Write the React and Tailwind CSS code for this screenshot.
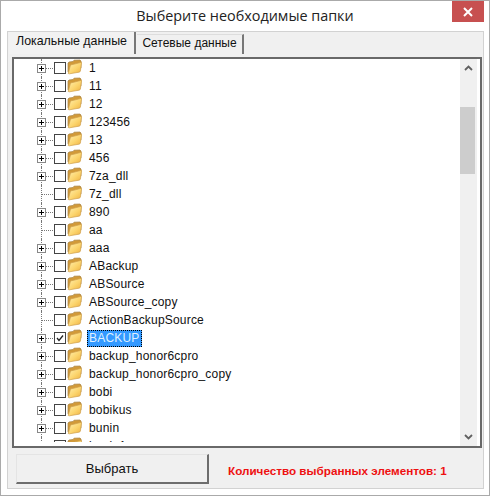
const folders = [
  { name: "1", plus: true },
  { name: "11", plus: true },
  { name: "12", plus: true },
  { name: "123456", plus: true },
  { name: "13", plus: true },
  { name: "456", plus: true },
  { name: "7za_dll", plus: true },
  { name: "7z_dll" },
  { name: "890", plus: true },
  { name: "aa" },
  { name: "aaa", plus: true },
  { name: "ABackup", plus: true },
  { name: "ABSource", plus: true },
  { name: "ABSource_copy", plus: true },
  { name: "ActionBackupSource" },
  { name: "BACKUP", plus: true, checked: true },
  { name: "backup_honor6cpro", plus: true },
  { name: "backup_honor6cpro_copy", plus: true },
  { name: "bobi", plus: true },
  { name: "bobikus", plus: true },
  { name: "bunin", plus: true },
  { name: "bunin1", plus: true },
];

const FolderIcon = () => (
  <svg width="15" height="16" viewBox="0 0 15 16" className="shrink-0">
    <defs>
      <linearGradient id="leaf" x1="0" y1="0" x2="1" y2="1">
        <stop offset="0" stopColor="#fff0b0" />
        <stop offset="0.55" stopColor="#fcd56e" />
        <stop offset="1" stopColor="#eeb040" />
      </linearGradient>
    </defs>
    <path d="M1 13 L1 4 L2 3 L6 2.5 L7 1.2 L13 1 L14 2 L14 9 Z" fill="#d29a38" stroke="#a88345" strokeWidth="0.7" />
    <path d="M1.2 14.5 L3.5 6 Q8 5 14.6 3.2 L13.4 12 Q13.2 13 12 13.2 L2.4 14.8 Z" fill="url(#leaf)" stroke="#cf9f4c" strokeWidth="0.7" />
  </svg>
);

const Row = ({ item }) => (
  <div className="flex items-center h-[18px] shrink-0">
    <div className="relative w-[16px] h-[18px] shrink-0">
      <div className="absolute left-[4px] top-0 h-[18px] border-l border-dotted border-[#777]" />
      <div className="absolute left-[5px] top-[9px] w-[11px] border-t border-dotted border-[#777]" />
      {item.plus && (
        <div className="absolute left-0 top-[5px] w-[9px] h-[9px] border border-[#888] bg-white flex items-center justify-center">
          <svg width="7" height="7" viewBox="0 0 7 7">
            <path d="M1 3.5 H6 M3.5 1 V6" stroke="#000" strokeWidth="1" />
          </svg>
        </div>
      )}
    </div>
    <div className="w-[12px] h-[12px] ml-[1px] border border-[#444] bg-white shrink-0 flex items-center justify-center">
      {item.checked && (
        <svg width="8" height="8" viewBox="0 0 8 8">
          <path d="M1 4 L3 6.5 L7 1.5" fill="none" stroke="#222" strokeWidth="1.3" />
        </svg>
      )}
    </div>
    <div className="ml-[1px] -mt-[3px]">
      <FolderIcon />
    </div>
    <span
      className={
        item.checked
          ? "ml-[5px] px-[1px] h-[17px] leading-[15px] bg-[#3399ff] text-[#dff0ff] border border-dotted border-black"
          : "ml-[7px] text-[#111]"
      }
    >
      {item.name}
    </span>
  </div>
);

export default function App() {
  return (
    <div className="relative w-[490px] h-[496px] bg-white border border-[#aaaaaa] font-['Liberation_Sans',sans-serif] flex flex-col overflow-hidden">
      <div className="h-[30px] shrink-0 flex items-center justify-center text-[14.4px] text-[#222] font-['Open_Sans',sans-serif]">
        Выберите необходимые папки
      </div>
      <div className="absolute right-[5px] top-0 w-[32px] h-[21px] bg-[#c75050] flex items-center justify-center">
        <svg width="10" height="10" viewBox="0 0 10 10">
          <path d="M1 1 L9 9 M9 1 L1 9" stroke="#fff" strokeWidth="2" />
        </svg>
      </div>

      <div className="ml-[6px] mr-[5px] h-[458px] bg-[#f0f0f0] border border-[#d2d2d2] flex flex-col">
        <div className="flex items-end h-[22px] shrink-0 pl-[1px]">
          <div className="w-[127px] h-[22px] pb-[3px] text-[12.4px] bg-[#f2f2f2] border-r-2 border-[#777] flex items-center justify-center text-[#111]">
            Локальные данные
          </div>
          <div className="w-[107px] h-[20px] pb-[3px] text-[12px] ml-[1px] border-r-2 border-t border-[#777] border-t-[#ddd] flex items-center justify-center text-[#111]">
            Сетевые данные
          </div>
        </div>

        <div className="mt-[3px] ml-[4px] mr-[1px] h-[391px] shrink-0 bg-white border-2 border-[#696969] flex overflow-hidden">
          <div className="flex-1 min-w-0 h-[383px] pl-[23px] text-[12px] tracking-[0.2px] flex flex-col overflow-hidden">
            {folders.map((item) => (
              <Row key={item.name} item={item} />
            ))}
          </div>
          <div className="w-[17px] shrink-0 mr-[3px] bg-[#f0f0f0] flex flex-col">
            <div className="h-[48px] shrink-0 pt-[6px] flex justify-center">
              <svg width="9" height="6" viewBox="0 0 9 6">
                <path d="M1 5 L4.5 1.5 L8 5" fill="none" stroke="#606060" strokeWidth="1.8" />
              </svg>
            </div>
            <div className="h-[67px] w-[15px] shrink-0 bg-[#cdcdcd]" />
            <div className="flex-1 flex items-end justify-center pb-[6px]">
              <svg width="9" height="6" viewBox="0 0 9 6">
                <path d="M1 1 L4.5 4.5 L8 1" fill="none" stroke="#606060" strokeWidth="1.8" />
              </svg>
            </div>
          </div>
        </div>

        <div className="flex items-center mt-[6px] pl-[8px]">
          <button className="w-[193px] h-[30px] bg-[#f0f0f0] border border-t-[#e4e4e4] border-l-[#e4e4e4] border-r-2 border-b-2 border-r-[#6d6d6d] border-b-[#6d6d6d] text-[13px] text-[#111]">
            Выбрать
          </button>
          <span className="ml-[19px] mt-[3px] text-[11.7px] font-bold text-[#ee1111]">
            Количество выбранных элементов: 1
          </span>
        </div>
      </div>
    </div>
  );
}
